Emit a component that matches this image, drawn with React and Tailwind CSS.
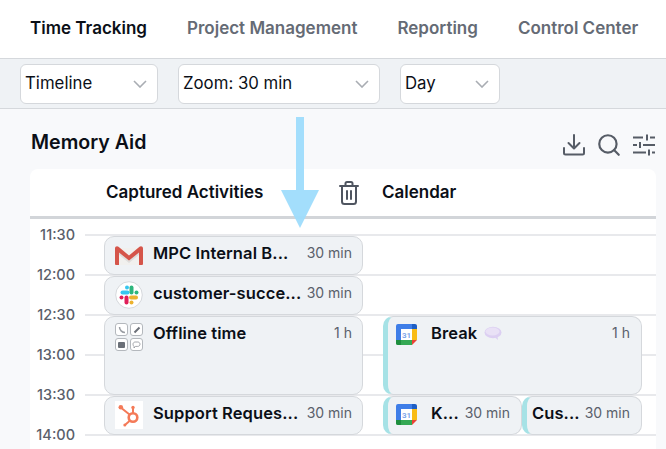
import { Search } from "lucide-react";

const tabs = ["Time Tracking", "Project Management", "Reporting", "Control Center"];
const times = ["11:30", "12:00", "12:30", "13:00", "13:30", "14:00"];

function Chevron() {
  return (
    <svg width="14" height="8" viewBox="0 0 14 8" fill="none" stroke="#a9adb3" strokeWidth="1.6" className="shrink-0">
      <path d="M1 1l6 6 6-6" />
    </svg>
  );
}

function Select({ label, className }) {
  return (
    <div className={`flex h-10 items-center justify-between rounded-md border border-[#d5d8dc] bg-white pl-[4px] pr-[10px] text-[16.800px] text-[#0b0f17] ${className}`}>
      <span>{label}</span>
      <Chevron />
    </div>
  );
}

function DownloadIcon() {
  return (
    <svg width="22" height="22" viewBox="0 0 22 22" fill="none" stroke="#565c66" strokeWidth="2" strokeLinecap="round" strokeLinejoin="round">
      <path d="M11 1v13M5.500 9l5.500 5.500L16.500 9" />
      <path d="M1 14v5a1.500 1.500 0 0 0 1.500 1.500h17A1.500 1.500 0 0 0 21 19v-5" />
    </svg>
  );
}

function SlidersIcon() {
  return (
    <svg width="22" height="22" viewBox="0 0 22 22" fill="none" stroke="#565c66" strokeWidth="2">
      <path d="M0 3.500h10M17 3.500h5M14 0.500v6M0 11h4M10 11h12M7 8v6M0 18.500h13M19 18.500h3M16 15.500v6" />
    </svg>
  );
}

function TrashIcon() {
  return (
    <svg width="20" height="24" viewBox="0 0 20 24" fill="none" stroke="#4f5560" strokeWidth="2" strokeLinecap="round" strokeLinejoin="round">
      <path d="M1 5h18M6.500 5V2.500A1.500 1.500 0 0 1 8 1h4a1.500 1.500 0 0 1 1.500 1.500V5" />
      <path d="M3 5v15.500A2.500 2.500 0 0 0 5.500 23h9a2.500 2.500 0 0 0 2.500-2.500V5" />
      <path d="M8 10v8M12 10v8" />
    </svg>
  );
}

function GmailIcon() {
  return (
    <svg width="28" height="19" viewBox="0 0 28 19" className="shrink-0">
      <path d="M3 2h22v17H3z" fill="#f1f0ee" />
      <path d="M3 5l11 9 11-9v3l-11 9-11-9z" fill="#dfdedc" />
      <path d="M0 2.500C0 0.500 2 -0.500 3.500 0.800L14 9.500 24.500 0.800C26 -0.500 28 0.500 28 2.500V18a1 1 0 0 1-1 1h-3V6.500L14 14.500 4 6.500V19H1a1 1 0 0 1-1-1z" fill="#d5554a" />
    </svg>
  );
}

function SlackIcon() {
  return (
    <svg width="28" height="28" viewBox="0 0 28 28" className="shrink-0">
      <circle cx="14" cy="14" r="13.300" fill="#fff" stroke="#d5d8dc" />
      <g strokeWidth="4" strokeLinecap="round" fill="none">
        <path d="M7.500 11.500h5" stroke="#36c5f0" />
        <path d="M12 6.500v0" stroke="#36c5f0" />
        <path d="M16.500 6.500v5" stroke="#2eb67d" />
        <path d="M21.500 11.500v0" stroke="#2eb67d" />
        <path d="M16 16.500h5" stroke="#ecb22e" />
        <path d="M16.500 21.500v0" stroke="#ecb22e" />
        <path d="M11.500 16.500v5" stroke="#e01e5a" />
        <path d="M6.500 16.500v0" stroke="#e01e5a" />
      </g>
    </svg>
  );
}

function OfflineIcon() {
  const cell = "flex h-[13px] w-[13px] items-center justify-center rounded-[3px] border border-[#b4b8bd] bg-white";
  return (
    <div className="grid h-[28px] w-[28px] shrink-0 grid-cols-2 gap-[2px]">
      <div className={cell}>
        <svg width="8" height="8" viewBox="0 0 8 8" fill="none" stroke="#9a9ea4">
          <path d="M1.500 1c0 3 2.500 5.500 5.500 5.500" strokeWidth="1.500" />
        </svg>
      </div>
      <div className={cell}>
        <svg width="8" height="8" viewBox="0 0 8 8" fill="none" stroke="#6b7078">
          <path d="M1.500 6.500L6.500 1.500" strokeWidth="2" />
        </svg>
      </div>
      <div className={cell}>
        <div className="h-[6px] w-[7px] rounded-[1px] bg-[#6b7078]" />
      </div>
      <div className={cell}>
        <svg width="9" height="8" viewBox="0 0 9 8" fill="none" stroke="#8d9197" strokeWidth="0.800">
          <path d="M1 3.200C1 2 2 1 3.200 1h2.600C7 1 8 2 8 3.200S7 5.400 5.800 5.400H3.500L2 7V5.200C1.400 4.900 1 4.100 1 3.200z" />
        </svg>
      </div>
    </div>
  );
}

function HubspotIcon() {
  return (
    <div className="flex h-[28px] w-[28px] shrink-0 items-center justify-center bg-white">
      <svg width="24" height="24" viewBox="0 0 24 24" fill="none" stroke="#f47a58">
        <circle cx="16" cy="14.500" r="4.300" strokeWidth="2.600" />
        <path d="M16 10V5.500M12.500 11.500L5 5.500M12.800 17.800L8.500 21.500" strokeWidth="2" />
        <circle cx="3.800" cy="4.300" r="2.300" fill="#f47a58" stroke="none" />
        <circle cx="16" cy="4.500" r="1.700" fill="#f47a58" stroke="none" />
        <circle cx="7.800" cy="22" r="1.500" fill="#f47a58" stroke="none" />
      </svg>
    </div>
  );
}

function CalendarIcon() {
  return (
    <svg width="21" height="21" viewBox="0 0 21 21" className="shrink-0">
      <path d="M2 0h14v5H5v11H0V2a2 2 0 0 1 2-2z" fill="#3f7ee8" />
      <path d="M16 0h3a2 2 0 0 1 2 2v3h-5z" fill="#1f5fc4" />
      <path d="M16 5h5v11h-5z" fill="#f9bc15" />
      <path d="M5 16h11v5H2a2 2 0 0 1-2-2v-3h5z" fill="#34a853" />
      <path d="M0 16h5v5H2a2 2 0 0 1-2-2z" fill="#1e8e3e" />
      <path d="M16 16h5l-5 5z" fill="#ea4335" />
      <rect x="5" y="5" width="11" height="11" fill="#fff" />
      <text x="10.500" y="14" textAnchor="middle" fontSize="8" fontWeight="700" fill="#7fa6ea" fontFamily="Roboto, sans-serif">31</text>
    </svg>
  );
}

function Bubble() {
  return (
    <svg width="18" height="15" viewBox="0 0 18 15" className="shrink-0">
      <ellipse cx="9" cy="6.500" rx="8.500" ry="5.800" fill="#dccff2" />
      <ellipse cx="8.500" cy="5.500" rx="7" ry="4" fill="#e9e1f6" />
      <path d="M11 11.500l3 2.500-0.500-3.500z" fill="#dccff2" />
    </svg>
  );
}

function EventCard({ title, duration, icon, extra, calendar, className }) {
  return (
    <div
      className={`z-10 mt-[2px] mb-[-1px] flex items-start rounded-[10px] border border-[#d5d8dc] bg-[#eff2f5] ${
        calendar ? "border-l-[5px] border-l-[#a6e2e6] " : ""
      }${className}`}
    >
      <div className={`flex min-w-0 flex-1 items-start pt-[6px] ${calendar ? "pr-[11px]" : "pr-[10px]"}`}>
        {icon}
        <div className="flex h-[20px] min-w-0 flex-1 items-center gap-[7px]">
          <span className="whitespace-nowrap text-[16.500px] font-semibold tracking-[0.1px] text-[#0b0f17]">{title}</span>
          {extra}
        </div>
        <span className="h-[20px] shrink-0 text-[14px] leading-[20px] text-[#5a606b]">{duration}</span>
      </div>
    </div>
  );
}

export default function App() {
  return (
    <div className="flex h-[449px] w-[666px] flex-col overflow-hidden bg-[#f8f9fb] font-['Inter',sans-serif]">
      <div className="flex h-[59px] shrink-0 items-center gap-10 border-b border-[#d5d8dc] bg-white pl-[30px] text-[17px] font-semibold text-[#656b75]">
        {tabs.map((tab, i) => (
          <span key={tab} className={i === 0 ? "whitespace-nowrap text-[#0b0f17]" : "whitespace-nowrap"}>
            {tab}
          </span>
        ))}
      </div>

      <div className="flex h-[50px] shrink-0 items-center gap-5 border-b border-[#d5d8dc] bg-[#eff2f5] pl-5">
        <Select label="Timeline" className="w-[138px]" />
        <Select label="Zoom: 30 min" className="w-[202px]" />
        <Select label="Day" className="w-[100px]" />
      </div>

      <div className="relative flex min-h-0 flex-1 flex-col pl-[30px] pr-[10px]">
        <div className="flex h-[60px] shrink-0 items-center justify-between pt-[8px]">
          <h2 className="pl-px text-[19.600px] font-semibold text-[#0b0f17]">Memory Aid</h2>
          <div className="flex items-center gap-[11px] pr-px pt-[4px]">
            <DownloadIcon />
            <Search size={26} color="#565c66" strokeWidth={2} />
            <SlidersIcon />
          </div>
        </div>

        <div className="flex-1 rounded-t-lg bg-white">
          <div className="flex h-[50px] items-center border-b-[3px] border-[#d2d5d9] pl-[76px] text-[17px] font-semibold text-[#0b0f17]">
            <span className="w-[233px] whitespace-nowrap">Captured Activities</span>
            <TrashIcon />
            <span className="ml-[23px]">Calendar</span>
          </div>

          <div className="mt-[15px] grid grid-cols-[74px_259px_20px_139px_120px_14px] grid-rows-[repeat(6,40px)]">
            {times.map((time, i) => (
              <div key={time} className="flex h-[2px] items-center" style={{ gridRow: i + 1, gridColumn: "1 / -1" }}>
                <span className="w-[45px] text-right text-[14.500px] font-medium text-[#5a606b]">{time}</span>
                <div className="ml-[10px] h-[2px] flex-1 bg-[#e8e9ec]" />
              </div>
            ))}

            <EventCard
              title="MPC Internal B..."
              duration="30 min"
              icon={<div className="mx-[10px] mt-[3px]"><GmailIcon /></div>}
              className="col-start-2 row-start-1"
            />
            <EventCard
              title="customer-succe..."
              duration="30 min"
              icon={<div className="mx-[10px] mt-[-2px]"><SlackIcon /></div>}
              className="col-start-2 row-start-2"
            />
            <EventCard
              title="Offline time"
              duration="1 h"
              icon={<div className="mx-[10px]"><OfflineIcon /></div>}
              className="col-start-2 row-start-3 row-span-2"
            />
            <EventCard
              title="Support Reques..."
              duration="30 min"
              icon={<div className="mx-[10px] mt-[-2px]"><HubspotIcon /></div>}
              className="col-start-2 row-start-5"
            />
            <EventCard
              calendar
              title="Break"
              duration="1 h"
              extra={<Bubble />}
              icon={<div className="ml-[8px] mr-[14px] mt-[1px]"><CalendarIcon /></div>}
              className="col-start-4 col-span-2 row-start-3 row-span-2"
            />
            <EventCard
              calendar
              title="K..."
              duration="30 min"
              icon={<div className="ml-[8px] mr-[14px] mt-[1px]"><CalendarIcon /></div>}
              className="col-start-4 row-start-5"
            />
            <EventCard
              calendar
              title="Cus..."
              duration="30 min"
              icon={<div className="ml-[5px]" />}
              className="col-start-5 row-start-5"
            />
          </div>
        </div>

        <svg width="38" height="112" viewBox="0 0 38 112" className="absolute left-[281px] top-[8px] z-20" fill="#9edcfc" fillOpacity="0.95">
          <path d="M15 0h8v73h15L19 111 0 73h15z" />
        </svg>
      </div>
    </div>
  );
}
